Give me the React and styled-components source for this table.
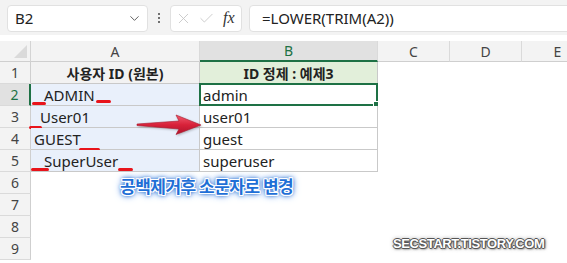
import React from 'react';
import styled, { createGlobalStyle } from 'styled-components';
import { ChevronDown, X, Check } from 'lucide-react';

const GlobalStyle = createGlobalStyle`
  html, body {
    margin: 0;
    padding: 0;
    background: #fff;
    overflow: hidden;
  }
  body {
    font-family: "Noto Sans", "Noto Sans CJK KR", sans-serif;
    color: #222;
  }
`;

const Page = styled.div`
  position: relative;
  width: 567px;
  height: 263px;
  overflow: hidden;
  background: #fff;
`;

const Toolbar = styled.div`
  display: flex;
  align-items: center;
  height: 35px;
  padding: 0 0 0 7px;
  background: #f3f3f3;
  margin-bottom: 6px;
`;

const NameBox = styled.div`
  display: flex;
  align-items: center;
  justify-content: space-between;
  box-sizing: border-box;
  width: 141px;
  height: 27px;
  margin-top: 1px;
  padding: 0 5px 0 7px;
  background: #fff;
  border: 1px solid #e1e1e1;
  border-radius: 4px;
  font-size: 15px;
  color: #222;
  svg { color: #555; }
`;

const Dots = styled.div`
  width: 22px;
  display: flex;
  flex-direction: column;
  align-items: center;
  gap: 2px;
  span {
    width: 2px;
    height: 2px;
    background: #444;
    border-radius: 1px;
  }
`;

const FxBox = styled.div`
  display: flex;
  align-items: center;
  gap: 6px;
  box-sizing: border-box;
  width: 72px;
  height: 27px;
  margin-top: 1px;
  padding: 0 4px 0 4px;
  background: #fff;
  border: 1px solid #e1e1e1;
  border-radius: 4px;
  svg { color: #c4c4c4; }
`;

const Fx = styled.span`
  margin-left: 2px;
  font-family: "Liberation Serif", serif;
  font-style: italic;
  font-size: 16px;
  color: #333;
`;

const FormulaInput = styled.div`
  flex: 1;
  box-sizing: border-box;
  height: 27px;
  margin-top: 1px;
  margin-left: 7px;
  margin-right: -20px;
  padding-left: 12px;
  display: flex;
  align-items: center;
  background: #fff;
  border: 1px solid #e1e1e1;
  border-radius: 4px;
  font-size: 15px;
  color: #222;
`;

const Sheet = styled.div`
  display: grid;
  grid-template-columns: 31px 169px 178px 72px 72px 72px;
  grid-template-rows: 21px repeat(9, 22px);
  width: 594px;
`;

const Corner = styled.div`
  position: relative;
  background: #f3f3f3;
  border-right: 1px solid #d4d4d4;
  border-bottom: 1px solid #cfcfcf;
  &::after {
    content: '';
    position: absolute;
    right: 3px;
    bottom: 3px;
    border-style: solid;
    border-width: 0 0 13px 13px;
    border-color: transparent transparent #dadada transparent;
  }
`;

const ColHead = styled.div`
  display: flex;
  align-items: center;
  justify-content: center;
  box-sizing: border-box;
  background: ${p => (p.$active ? '#e1e1e1' : '#f3f3f3')};
  border-right: 1px solid #dadada;
  border-bottom: ${p => (p.$active ? '2px solid #1e7145' : '1px solid #cfcfcf')};
  font-size: 14px;
  color: ${p => (p.$active ? '#1e7145' : '#444')};
`;

const RowHead = styled.div`
  display: flex;
  align-items: center;
  justify-content: center;
  box-sizing: border-box;
  background: ${p => (p.$active ? '#e1e1e1' : '#f3f3f3')};
  border-bottom: 1px solid #dadada;
  border-right: ${p => (p.$active ? '2px solid #1e7145' : '1px solid #cfcfcf')};
  font-size: 14px;
  color: ${p => (p.$active ? '#1e7145' : '#444')};
`;

const Cell = styled.div`
  position: relative;
  display: flex;
  align-items: center;
  box-sizing: border-box;
  padding-left: ${p => p.$indent ?? 3}px;
  background: ${p => p.$bg || '#fff'};
  border-right: ${p => (p.$table ? '1px solid #c9c9c9' : 'none')};
  border-bottom: ${p => (p.$table ? '1px solid #c9c9c9' : 'none')};
  font-size: 15px;
  color: #222;
  white-space: pre;
`;

const HeadCell = styled(Cell)`
  justify-content: center;
  padding-left: 0;
  font-size: 14px;
  font-weight: 700;
  color: #222;
`;

const Selection = styled.div`
  position: absolute;
  left: -1px;
  top: -1px;
  right: -1px;
  bottom: -1px;
  border: 2px solid #1e7145;
  pointer-events: none;
  &::after {
    content: '';
    position: absolute;
    right: -5px;
    bottom: -5px;
    width: 6px;
    height: 6px;
    background: #1e7145;
    border: 1px solid #fff;
  }
`;

const SpaceMark = styled.span`
  position: absolute;
  height: 3px;
  border-radius: 2px;
  background: #e8141b;
`;

const Arrow = styled.svg`
  position: absolute;
  left: 135px;
  top: 113px;
  filter: drop-shadow(1px 1px 1px rgba(0, 0, 0, 0.25));
`;

const Caption = styled.div`
  position: absolute;
  left: 120px;
  top: 173px;
  font-family: "Noto Sans CJK KR", sans-serif;
  font-size: 17px;
  font-weight: 700;
  letter-spacing: -0.5px;
  color: #1f6fd6;
  text-shadow:
    1px 0 0 #fff, -1px 0 0 #fff, 0 1px 0 #fff, 0 -1px 0 #fff,
    1px 1px 0 #fff, -1px -1px 0 #fff, 1px -1px 0 #fff, -1px 1px 0 #fff,
    0 0 3px #2a6fd0, 0 0 4px #2a6fd0, 0 0 6px #4d8ae0, 0 0 8px #6fa0e6;
`;

const Watermark = styled.div`
  position: absolute;
  left: 393px;
  top: 236px;
  font-family: "Liberation Sans", sans-serif;
  font-size: 13px;
  font-weight: 700;
  letter-spacing: -0.4px;
  color: #fff;
  text-shadow:
    1px 0 0 #555, -1px 0 0 #555, 0 1px 0 #555, 0 -1px 0 #555,
    1px 1px 2px #444, 0 0 4px #777;
`;

const rows = [
  { a: 'ADMIN', b: 'admin', indent: 13, marks: [{ l: 1, w: 14, t: 18 }, { l: 65, w: 15, t: 16 }] },
  { a: 'User01', b: 'user01', indent: 9, marks: [{ l: -2, w: 13, t: 20 }] },
  { a: 'GUEST', b: 'guest', indent: 3, marks: [{ l: 48, w: 21, t: 20 }] },
  { a: 'SuperUser', b: 'superuser', indent: 13, marks: [{ l: 0, w: 18, t: 18 }, { l: 87, w: 15, t: 18 }] },
];

const App = () => {
  return (
    <Page>
      <GlobalStyle />
      <Toolbar>
        <NameBox>
          B2
          <ChevronDown size={15} strokeWidth={1.5} />
        </NameBox>
        <Dots><span /><span /><span /></Dots>
        <FxBox>
          <X size={17} strokeWidth={1.2} />
          <Check size={17} strokeWidth={1.2} />
          <Fx>fx</Fx>
        </FxBox>
        <FormulaInput>=LOWER(TRIM(A2))</FormulaInput>
      </Toolbar>

      <Sheet>
        <Corner />
        <ColHead>A</ColHead>
        <ColHead $active>B</ColHead>
        <ColHead>C</ColHead>
        <ColHead>D</ColHead>
        <ColHead>E</ColHead>

        <RowHead>1</RowHead>
        <HeadCell $table $bg="#f2f2f2">사용자 ID (원본)</HeadCell>
        <HeadCell $table $bg="#e2efda">ID 정제 : 예제3</HeadCell>
        <Cell />
        <Cell />
        <Cell />

        {rows.map((r, i) => (
          <React.Fragment key={r.a}>
            <RowHead $active={i === 0}>{i + 2}</RowHead>
            <Cell $table $bg="#e9f0fb" $indent={r.indent}>
              {r.a}
              {r.marks.map((m, j) => (
                <SpaceMark key={j} style={{ left: m.l, width: m.w, top: m.t }} />
              ))}
            </Cell>
            <Cell $table>
              {r.b}
              {i === 0 && <Selection />}
            </Cell>
            <Cell />
            <Cell />
            <Cell />
          </React.Fragment>
        ))}

        {[6, 7, 8, 9].map(n => (
          <React.Fragment key={n}>
            <RowHead>{n}</RowHead>
            <Cell />
            <Cell />
            <Cell />
            <Cell />
            <Cell />
          </React.Fragment>
        ))}
      </Sheet>

      <Arrow width="70" height="24" viewBox="0 0 70 24">
        <defs>
          <linearGradient id="arrowFill" x1="0" y1="0" x2="0" y2="1">
            <stop offset="0" stopColor="#f25b6e" />
            <stop offset="0.5" stopColor="#d8223a" />
            <stop offset="1" stopColor="#b0132a" />
          </linearGradient>
        </defs>
        <path
          d="M2 11 L44 8 L41 2 L66 12 L41 21.5 L44 16 L2 12.5 Z"
          fill="url(#arrowFill)"
          stroke="#a8182c"
          strokeWidth="0.6"
          strokeLinejoin="round"
        />
      </Arrow>

      <Caption>공백제거후 소문자로 변경</Caption>
      <Watermark>SECSTART.TISTORY.COM</Watermark>
    </Page>
  );
};

export default App;
